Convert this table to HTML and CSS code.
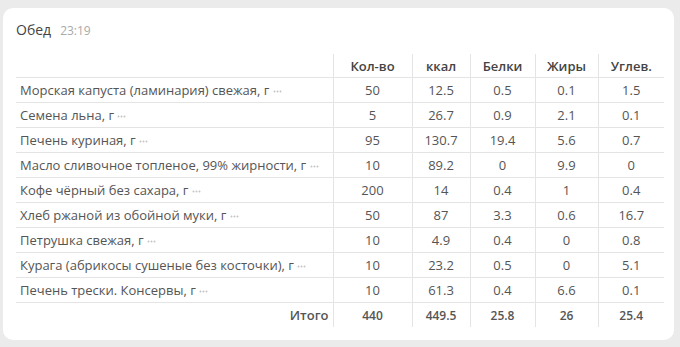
FILE: index.html
```html
<!DOCTYPE html>
<html lang="ru">
<head>
<meta charset="utf-8">
<link rel="stylesheet" href="styles.css">
</head>
<body>
<div class="card">
  <div class="title"><span class="meal">Обед</span><span class="time">23:19</span></div>
  <table class="tbl">
    <colgroup>
      <col class="c-name"><col class="c-qty"><col class="c-kcal"><col class="c-p"><col class="c-f"><col class="c-c">
    </colgroup>
    <thead>
      <tr><th></th><th>Кол-во</th><th>ккал</th><th>Белки</th><th>Жиры</th><th>Углев.</th></tr>
    </thead>
    <tbody>
      <tr><td class="name">Морская капуста (ламинария) свежая, г <svg class="dots" width="9" height="3" viewBox="0 0 9 3"><circle cx="1.5" cy="1.5" r="1"/><circle cx="4.5" cy="1.5" r="1"/><circle cx="7.5" cy="1.5" r="1"/></svg></td><td>50</td><td>12.5</td><td>0.5</td><td>0.1</td><td>1.5</td></tr>
      <tr><td class="name">Семена льна, г <svg class="dots" width="9" height="3" viewBox="0 0 9 3"><circle cx="1.5" cy="1.5" r="1"/><circle cx="4.5" cy="1.5" r="1"/><circle cx="7.5" cy="1.5" r="1"/></svg></td><td>5</td><td>26.7</td><td>0.9</td><td>2.1</td><td>0.1</td></tr>
      <tr><td class="name">Печень куриная, г <svg class="dots" width="9" height="3" viewBox="0 0 9 3"><circle cx="1.5" cy="1.5" r="1"/><circle cx="4.5" cy="1.5" r="1"/><circle cx="7.5" cy="1.5" r="1"/></svg></td><td>95</td><td>130.7</td><td>19.4</td><td>5.6</td><td>0.7</td></tr>
      <tr><td class="name">Масло сливочное топленое, 99% жирности, г <svg class="dots" width="9" height="3" viewBox="0 0 9 3"><circle cx="1.5" cy="1.5" r="1"/><circle cx="4.5" cy="1.5" r="1"/><circle cx="7.5" cy="1.5" r="1"/></svg></td><td>10</td><td>89.2</td><td>0</td><td>9.9</td><td>0</td></tr>
      <tr><td class="name">Кофе чёрный без сахара, г <svg class="dots" width="9" height="3" viewBox="0 0 9 3"><circle cx="1.5" cy="1.5" r="1"/><circle cx="4.5" cy="1.5" r="1"/><circle cx="7.5" cy="1.5" r="1"/></svg></td><td>200</td><td>14</td><td>0.4</td><td>1</td><td>0.4</td></tr>
      <tr><td class="name">Хлеб ржаной из обойной муки, г <svg class="dots" width="9" height="3" viewBox="0 0 9 3"><circle cx="1.5" cy="1.5" r="1"/><circle cx="4.5" cy="1.5" r="1"/><circle cx="7.5" cy="1.5" r="1"/></svg></td><td>50</td><td>87</td><td>3.3</td><td>0.6</td><td>16.7</td></tr>
      <tr><td class="name">Петрушка свежая, г <svg class="dots" width="9" height="3" viewBox="0 0 9 3"><circle cx="1.5" cy="1.5" r="1"/><circle cx="4.5" cy="1.5" r="1"/><circle cx="7.5" cy="1.5" r="1"/></svg></td><td>10</td><td>4.9</td><td>0.4</td><td>0</td><td>0.8</td></tr>
      <tr><td class="name">Курага (абрикосы сушеные без косточки), г <svg class="dots" width="9" height="3" viewBox="0 0 9 3"><circle cx="1.5" cy="1.5" r="1"/><circle cx="4.5" cy="1.5" r="1"/><circle cx="7.5" cy="1.5" r="1"/></svg></td><td>10</td><td>23.2</td><td>0.5</td><td>0</td><td>5.1</td></tr>
      <tr><td class="name">Печень трески. Консервы, г <svg class="dots" width="9" height="3" viewBox="0 0 9 3"><circle cx="1.5" cy="1.5" r="1"/><circle cx="4.5" cy="1.5" r="1"/><circle cx="7.5" cy="1.5" r="1"/></svg></td><td>10</td><td>61.3</td><td>0.4</td><td>6.6</td><td>0.1</td></tr>
      <tr class="total"><td class="label">Итого</td><td>440</td><td>449.5</td><td>25.8</td><td>26</td><td>25.4</td></tr>
    </tbody>
  </table>
</div>
</body>
</html>
```

FILE: styles.css
```css
html, body {
  margin: 0;
  padding: 0;
}
body {
  background: #ebebeb;
  font-family: "Open Sans", "Noto Sans", sans-serif;
  color: #555;
  height: 347px;
  overflow: hidden;
}
.card {
  margin: 8px 0 0 3px;
  width: 671px;
  height: 332px;
  box-sizing: border-box;
  background: #fff;
  border-radius: 10px;
  padding: 12px 10px 0 13px;
}
.title {
  display: flex;
  align-items: baseline;
  gap: 9px;
  height: 20px;
  line-height: 20px;
}
.meal {
  font-size: 14px;
  color: #444;
}
.time {
  font-size: 12px;
  color: #aaa;
}
.tbl {
  margin-top: 14px;
  width: 648px;
  table-layout: fixed;
  border-collapse: collapse;
  font-size: 13px;
}
.c-name { width: 317px; }
.c-qty { width: 79px; }
.c-kcal { width: 58px; }
.c-p { width: 65px; }
.c-f { width: 63px; }
.c-c { width: 66px; }
.tbl th, .tbl td {
  padding: 0;
  text-align: center;
  white-space: nowrap;
}
.tbl th {
  height: 23px;
  font-weight: 600;
  color: #444;
  border-bottom: 1px solid #e4e4e4;
}
.tbl td {
  height: 24px;
  border-bottom: 1px solid #e4e4e4;
}
.tbl th + th, .tbl td + td {
  border-left: 1px solid #e4e4e4;
}
.tbl td.name {
  text-align: left;
  padding-left: 4px;
}
.dots {
  fill: #c4c4c4;
  vertical-align: 2px;
}
.tbl tr.total td {
  border-bottom: none;
  font-size: 12px;
  font-weight: 600;
}
.tbl tr.total td.label {
  text-align: right;
  padding-right: 4px;
  font-size: 13px;
}
```
